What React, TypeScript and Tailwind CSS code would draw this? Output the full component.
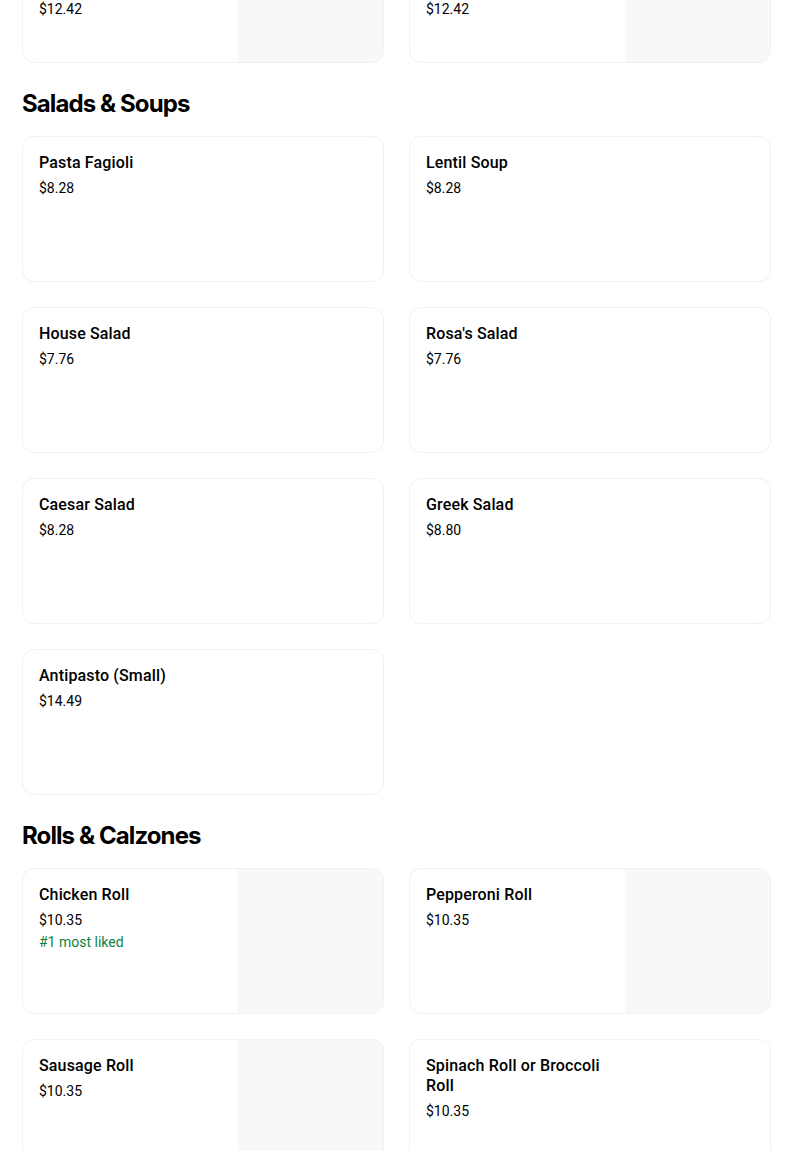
import React from "react";

type Item = { name: string; price: string; img?: "gray" | "white"; liked?: boolean };

const body = { fontFamily: "Roboto, 'Liberation Sans', sans-serif" };
const head = { fontFamily: "Inter, 'Liberation Sans', sans-serif" };

function Card({ item }: { item: Item }) {
  return (
    <div className="flex h-[146px] w-[362px] overflow-hidden rounded-[12px] border border-[#f1f1f1] bg-white">
      <div className="flex min-w-0 flex-1 flex-col px-4 pt-4">
        <div className="w-[184px] text-[16px] font-medium leading-5 tracking-[0.15px] text-black">{item.name}</div>
        <div className="mt-[5px] text-[14px] leading-5 text-black">{item.price}</div>
        {item.liked && <div className="mt-[2px] text-[14px] leading-5 text-[#0e8345]">#1 most liked</div>}
      </div>
      {item.img === "gray" && <div className="h-full w-[145px] shrink-0 bg-[#f8f8f8]" />}
      {item.img === "white" && <div className="h-full w-[145px] shrink-0 bg-white" />}
    </div>
  );
}

function TopCard({ price }: { price: string }) {
  return (
    <div className="flex h-[146px] w-[362px] overflow-hidden rounded-[12px] border border-[#f1f1f1] bg-white">
      <div className="flex min-w-0 flex-1 flex-col px-4 pt-[83px]">
        <div className="text-[14px] leading-4 text-black">{price}</div>
      </div>
      <div className="h-full w-[145px] shrink-0 bg-[#f8f8f8]" />
    </div>
  );
}

function Grid({ items }: { items: Item[] }) {
  return (
    <div className="grid grid-cols-[362px_362px] gap-x-[25px] gap-y-[25px]">
      {items.map((it, i) => (
        <Card key={i} item={it} />
      ))}
    </div>
  );
}

function Heading({ children }: { children: React.ReactNode }) {
  return (
    <h2
      className="mt-[25px] mb-4 text-[24px] font-bold leading-8 tracking-[-0.9px] text-black"
      style={head}
    >
      {children}
    </h2>
  );
}

export default function App() {
  const salads: Item[] = [
    { name: "Pasta Fagioli", price: "$8.28" },
    { name: "Lentil Soup", price: "$8.28" },
    { name: "House Salad", price: "$7.76" },
    { name: "Rosa's Salad", price: "$7.76" },
    { name: "Caesar Salad", price: "$8.28" },
    { name: "Greek Salad", price: "$8.80" },
    { name: "Antipasto (Small)", price: "$14.49" },
  ];
  const rolls: Item[] = [
    { name: "Chicken Roll", price: "$10.35", img: "gray", liked: true },
    { name: "Pepperoni Roll", price: "$10.35", img: "gray" },
    { name: "Sausage Roll", price: "$10.35", img: "gray" },
    { name: "Spinach Roll or Broccoli Roll", price: "$10.35", img: "white" },
  ];
  return (
    <div className="h-[1151px] w-[804px] overflow-hidden bg-white" style={body}>
      <div className="ml-[22px] -mt-[83px]">
        <div className="grid grid-cols-[362px_362px] gap-x-[25px]">
          <TopCard price="$12.42" />
          <TopCard price="$12.42" />
        </div>
        <Heading>Salads &amp; Soups</Heading>
        <Grid items={salads} />
        <Heading>Rolls &amp; Calzones</Heading>
        <Grid items={rolls} />
      </div>
    </div>
  );
}
